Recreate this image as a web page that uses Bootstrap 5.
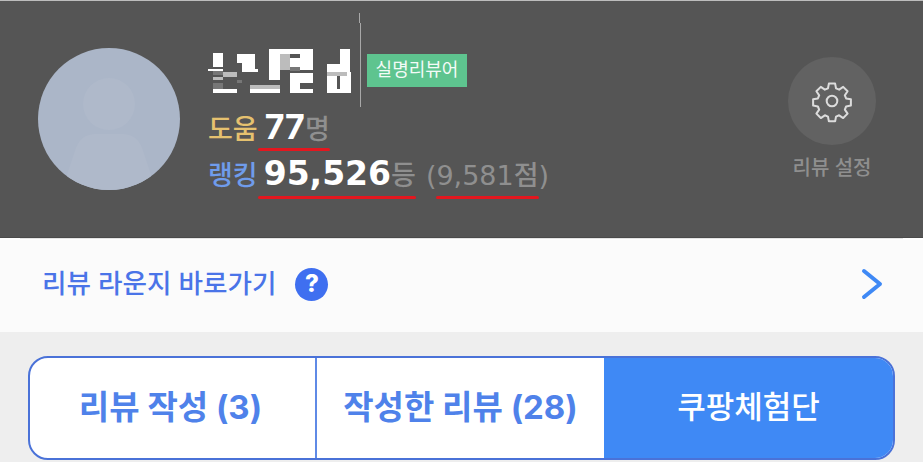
<!DOCTYPE html>
<html lang="ko">
<head>
  <meta charset="UTF-8">
  <meta name="viewport" content="width=device-width, initial-scale=1">
  <title>리뷰</title>
  <link href="https://cdn.jsdelivr.net/npm/bootstrap@5.3.0/dist/css/bootstrap.min.css" rel="stylesheet">
  <style>
    body {
      width: 923px;
      height: 462px;
      overflow: hidden;
      background: #eeeeee;
      font-family: "Inter", "Noto Sans CJK KR", sans-serif;
    }

    /* Dark profile header */
    .hero {
      height: 238px;
      position: relative;
      background: #555555;
      border-top: 1px solid #bdbdbd;
      border-bottom: 1px solid #4a4a4a;
      padding: 47px 47px 0 38px;
    }
    .avatar { width: 142px; height: 142px; flex: none; }
    .info { margin-left: 28px; }
    .name-row { height: 41px; margin-top: 2px; }
    .name-blur { width: 145px; height: 45px; display: block; flex: none; }
    .cut-line {
      position: absolute;
      left: 360px;
      top: 22px;
      width: 1px;
      height: 84px;
      background: #a8a8a8;
    }
    .cut-line::before {
      content: "";
      position: absolute;
      left: -1px;
      top: -10px;
      width: 1px;
      height: 10px;
      background: #a8a8a8;
    }
    .tag {
      margin-left: 14px;
      width: 100px;
      height: 33px;
      background: #5ec48f;
      color: #f4fbf7;
      font-size: 18px;
      line-height: 32px;
      text-align: center;
      white-space: nowrap;
    }
    .stat { font-size: 27px; font-weight: 500; line-height: 40px; white-space: nowrap; }
    .stat-help { color: #e5c16f; margin-top: 16px; }
    .stat-rank { color: #6f9cec; margin-top: 4px; }
    .num { color: #fff; font-weight: 700; font-size: 34px; margin-left: 7px; }
    .stat-rank .num { font-family: "DejaVu Sans", sans-serif; font-size: 33px; margin-left: 6px; }
    .unit { color: #8f8f8f; }
    .score { color: #8f8f8f; margin-left: 10px; }
    .score-num { font-family: "DejaVu Sans", "Noto Sans CJK KR", sans-serif; font-size: 27px; }
    .red-under { position: relative; }
    .red-under::after {
      content: "";
      position: absolute;
      left: 0;
      right: 0;
      bottom: -5px;
      height: 3px;
      border-radius: 2px;
      background: #e3171f;
    }
    .stat-rank .red-under::after { bottom: -7px; }
    .gear-col { margin-left: auto; margin-top: 9px; width: 88px; }
    .gear-btn { width: 88px; height: 88px; background: #626262; }
    .gear-label { color: #8f8f8f; font-size: 20px; font-weight: 500; margin-top: 8px; white-space: nowrap; }

    /* Lounge link row */
    .lounge-edge { height: 2px; background: #fff; padding: 0 20px; }
    .lounge-edge-line { height: 1px; background: #e4e4e4; }
    .lounge {
      height: 92px;
      background: #fbfbfb;
      padding: 0 40px 4px 42px;
      color: #4a74e8;
      font-size: 26.6px;
      font-weight: 500;
    }
    .lounge-help {
      width: 33px;
      height: 33px;
      margin-left: 19px;
      background: #3f6ff0;
      color: #fff;
      font-size: 24px;
      font-weight: 800;
    }

    /* Segmented tabs */
    .tabs-wrap { padding: 24px 28px 0; }
    .tabs {
      height: 104px;
      border: 2px solid #4a72d8;
      border-radius: 20px;
      overflow: hidden;
      background: #fff;
    }
    .tab {
      color: #4f82ea;
      font-size: 33px;
      font-weight: 700;
      white-space: nowrap;
      padding-bottom: 1px;
    }
    .tab-a { width: 285px; padding-right: 4px; }
    .tab-b { width: 289px; border-left: 2px solid #5f8ae6; }
    .tab-c { flex: 1; background: #3f89f5; color: #fff; font-size: 31px; font-weight: 500; }
  </style>
</head>
<body>

  <div class="hero d-flex align-items-start">
    <svg class="avatar" viewBox="0 0 142 142">
      <defs><clipPath id="face"><circle cx="71" cy="71" r="71"/></clipPath></defs>
      <circle cx="71" cy="71" r="71" fill="#abb6c8"/>
      <g clip-path="url(#face)" fill="#afb9ca">
        <circle cx="71" cy="56" r="26"/>
        <path d="M24 142 L38 100 Q43 86 58 86 L84 86 Q99 86 104 100 L118 142 Z"/>
      </g>
    </svg>

    <div class="info">
      <div class="name-row d-flex align-items-center">
        <!-- name is mosaicked in the source -->
        <svg class="name-blur" viewBox="208 48 145 45">
          <g fill="#fff">
            <rect x="213" y="53" width="10" height="14"/>
            <rect x="208" y="69" width="15" height="2"/>
            <rect x="213" y="89" width="24" height="4"/>
            <rect x="237" y="54" width="18" height="9"/>
            <rect x="242" y="63" width="13" height="9"/>
            <rect x="255" y="69" width="3" height="3"/>
            <rect x="269" y="49" width="11" height="31"/>
            <rect x="250" y="89" width="30" height="4"/>
            <rect x="280" y="49" width="33" height="5"/>
            <rect x="300" y="49" width="13" height="21"/>
            <rect x="290" y="58" width="10" height="9"/>
            <rect x="290" y="73" width="23" height="10"/>
            <rect x="290" y="83" width="10" height="10"/>
            <rect x="290" y="89" width="23" height="4"/>
            <rect x="340" y="49" width="10" height="23"/>
            <rect x="327" y="64" width="23" height="8"/>
            <rect x="327" y="76" width="10" height="17"/>
            <rect x="340" y="76" width="7" height="17"/>
            <rect x="347" y="72" width="4" height="21"/>
            <rect x="327" y="89" width="24" height="4"/>
          </g>
          <g fill="#bcbcbc">
            <rect x="223" y="72" width="14" height="5"/>
            <rect x="213" y="77" width="10" height="3"/>
            <rect x="250" y="85" width="30" height="4"/>
            <rect x="280" y="54" width="10" height="16"/>
            <rect x="327" y="72" width="20" height="4"/>
          </g>
          <g fill="#777">
            <rect x="213" y="71" width="10" height="4"/>
            <rect x="213" y="83" width="10" height="6"/>
            <rect x="237" y="80" width="5" height="3"/>
            <rect x="290" y="67" width="10" height="4"/>
          </g>
        </svg>
        <div class="tag">실명리뷰어</div>
      </div>
      <div class="stat stat-help"><span>도움</span><span class="red-under"><span class="num">77</span><span class="unit">명</span></span></div>
      <div class="stat stat-rank"><span>랭킹</span><span class="red-under"><span class="num">95,526</span><span class="unit">등</span></span><span class="score"><span class="score-num">(</span><span class="red-under"><span class="score-num">9,581</span>점</span><span class="score-num">)</span></span></div>
    </div>

    <div class="gear-col d-flex flex-column align-items-center">
      <div class="gear-btn rounded-circle d-flex align-items-center justify-content-center">
        <svg width="44" height="44" viewBox="0 0 24 24" fill="none" stroke="#dcdcdc" stroke-width="1.1" stroke-linejoin="round">
          <circle cx="12" cy="12" r="2.9"/>
          <path d="M10.3 2.5h3.4l.5 2.6 1.7.7 2.2-1.5 2.4 2.4-1.5 2.2.7 1.7 2.6.5v3.4l-2.6.5-.7 1.7 1.5 2.2-2.4 2.4-2.2-1.5-1.7.7-.5 2.6h-3.4l-.5-2.6-1.7-.7-2.2 1.5-2.4-2.4 1.5-2.2-.7-1.7-2.6-.5v-3.4l2.6-.5.7-1.7-1.5-2.2 2.4-2.4 2.2 1.5 1.7-.7z"/>
        </svg>
      </div>
      <div class="gear-label">리뷰 설정</div>
    </div>

    <div class="cut-line"></div>
  </div>

  <div class="lounge-edge"><div class="lounge-edge-line"></div></div>
  <div class="lounge d-flex align-items-center">
    <span>리뷰 라운지 바로가기</span>
    <span class="lounge-help rounded-circle d-flex align-items-center justify-content-center">?</span>
    <svg class="ms-auto" width="22" height="32" viewBox="0 0 22 32" fill="none" stroke="#3f89f5" stroke-width="4" stroke-linecap="round" stroke-linejoin="round">
      <path d="M3 3 L19 16 L3 29"/>
    </svg>
  </div>

  <div class="tabs-wrap">
    <div class="tabs d-flex">
      <div class="tab tab-a d-flex align-items-center justify-content-center">리뷰 작성 (3)</div>
      <div class="tab tab-b d-flex align-items-center justify-content-center">작성한 리뷰 (28)</div>
      <div class="tab tab-c d-flex align-items-center justify-content-center">쿠팡체험단</div>
    </div>
  </div>

  <script src="https://cdn.jsdelivr.net/npm/bootstrap@5.3.0/dist/js/bootstrap.bundle.min.js"></script>
</body>
</html>
